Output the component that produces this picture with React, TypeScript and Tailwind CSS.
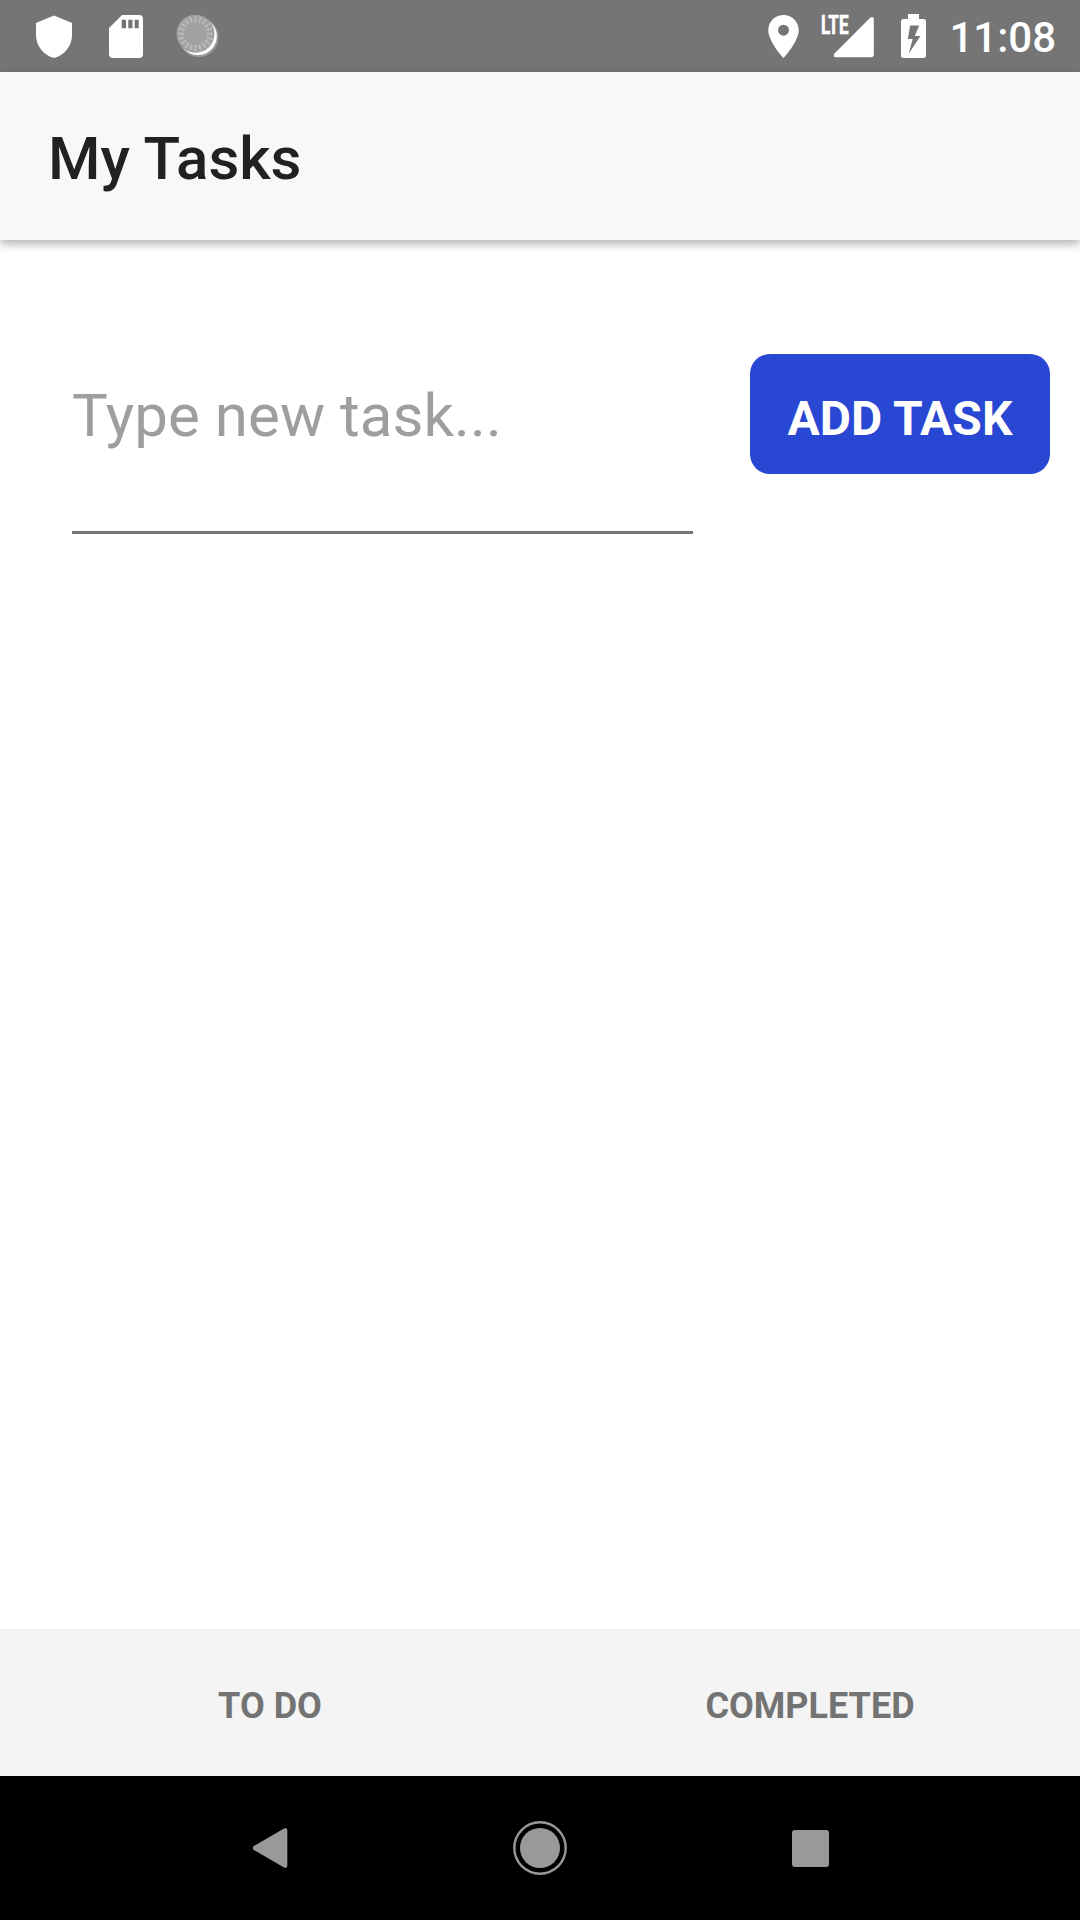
import React from "react";

const tickAngles = Array.from({ length: 20 }, (_, i) => i * 18);

function NotificationIcons() {
  return (
    <div className="flex items-center">
      <svg className="ml-9 h-[43px] w-9" viewBox="0 0 36 43" fill="#fff">
        <path d="M18 0.5 L36 8 V20 C36 30.5 28.5 40.5 18 43 C7.500 40.500 0 30.500 0 20 V8 Z" />
      </svg>
      <svg className="ml-[37px] h-[43px] w-[34px]" viewBox="0 0 34 43">
        <path
          fill="#fff"
          fillRule="evenodd"
          d="M13 0 H30 Q34 0 34 4 V39 Q34 43 30 43 H4 Q0 43 0 39 V13 Z M12.700 4.700 V13.300 H17 V4.700 Z M19.300 4.700 V13.300 H23.500 V4.700 Z M25.700 4.700 V13.300 H29.700 V4.700 Z"
        />
      </svg>
      <svg className="ml-[32px] h-[46px] w-[46px]" viewBox="0 0 46 46">
        <circle cx="23.800" cy="24.200" r="19.800" fill="#fff" opacity="0.28" />
        <circle cx="23" cy="23.300" r="18.800" fill="#fff" />
        <circle cx="20.500" cy="20.700" r="19" fill="#a1a1a1" />
        <g stroke="#b8b8b8" strokeWidth="2.200">
          {tickAngles.map((angle) => (
            <line key={angle} x1="20.500" y1="3.200" x2="20.500" y2="9.200" transform={`rotate(${angle} 20.500 20.700)`} />
          ))}
        </g>
      </svg>
    </div>
  );
}

function SystemIcons() {
  return (
    <div className="flex items-center">
      <svg className="mr-[22px] h-[43px] w-[31px]" viewBox="0 0 31 43">
        <path
          fill="#fff"
          fillRule="evenodd"
          d="M15.500 0 C6.900 0 0.300 6.700 0.300 15.200 C0.300 26.500 15.500 43 15.500 43 S30.700 26.500 30.700 15.200 C30.700 6.700 24.100 0 15.500 0 Z M15.500 9.700 A5.500 5.500 0 1 1 15.500 20.700 A5.500 5.500 0 1 1 15.500 9.700 Z"
        />
      </svg>
      <svg className="mr-[27px] h-[43px] w-[53px] overflow-visible" viewBox="0 0 53 43" fill="#fff">
        <text
          x="0"
          y="19.300"
          fontFamily="Roboto, sans-serif"
          fontSize="26"
          fontWeight="700"
          stroke="#fff"
          strokeWidth="0.700"
          textLength="27.500"
          lengthAdjust="spacingAndGlyphs"
        >
          LTE
        </text>
        <path d="M49.200 2.700 Q52.800 0.500 52.800 4.500 V39.500 Q52.800 42.300 50 42.300 H15 Q11.500 42 13.500 38.500 Z" />
      </svg>
      <svg className="mr-[23px] h-[44px] w-[25px]" viewBox="0 0 25 44">
        <path
          fill="#fff"
          fillRule="evenodd"
          d="M7 0 H18 V5 H22.500 Q25 5 25 7.500 V41.500 Q25 44 22.500 44 H2.500 Q0 44 0 41.500 V7.500 Q0 5 2.500 5 H7 Z M9.200 11.500 L6.800 25 H11.700 L7.700 39.700 L19.500 22 H13.800 L18.200 11.500 Z"
        />
      </svg>
      <time className="mr-6 pt-[3px] text-[42px] leading-[50px] font-medium text-white">11:08</time>
    </div>
  );
}

function NavigationBar() {
  return (
    <nav className="grid h-36 grid-cols-4 items-center bg-black">
      <button aria-label="Back" className="col-start-1 flex translate-x-[135px] justify-center">
        <svg className="h-[42px] w-9" viewBox="0 0 36 42" fill="#999">
          <path d="M1.800 19 L32 1.500 Q35.300 0.200 35.300 3.500 V38.500 Q35.300 41.800 32 40.500 L1.800 23 Q-0.200 21 1.800 19 Z" />
        </svg>
      </button>
      <button aria-label="Home" className="col-span-2 col-start-2 flex justify-center">
        <svg className="h-14 w-14" viewBox="0 0 56 56">
          <circle cx="28" cy="28" r="25.700" fill="none" stroke="#999" strokeWidth="2.400" />
          <circle cx="28" cy="28" r="20" fill="#999" />
        </svg>
      </button>
      <button aria-label="Overview" className="flex -translate-x-[135px] justify-center">
        <span className="h-[37px] w-[37px] rounded-[3px] bg-[#999]" />
      </button>
    </nav>
  );
}

export default function App() {
  return (
    <div className="flex h-[1920px] w-[1080px] flex-col bg-white font-[Roboto,sans-serif]">
      <div className="flex h-[72px] shrink-0 items-center justify-between bg-[#757575]">
        <NotificationIcons />
        <SystemIcons />
      </div>
      <header className="flex h-[168px] shrink-0 items-center bg-[#f8f8f8] pt-[5px] pl-12 shadow-[0_4px_9px_rgba(0,0,0,0.30)]">
        <h1 className="text-[60px] leading-[70px] font-medium text-[#212121]">My Tasks</h1>
      </header>
      <main className="flex flex-1 items-start justify-between pt-[114px] pr-[30px] pl-[72px]">
        <input
          aria-label="New task"
          placeholder="Type new task..."
          className="mt-[-16px] h-[196px] w-[621px] border-b-[3px] border-[#757575] bg-transparent pb-[38px] text-[60px] tracking-[0.08px] outline-none placeholder:text-[#9e9e9e]"
        />
        <button className="h-[120px] w-[300px] rounded-[20px] bg-[#2847d2] pt-[9px] text-[48px] leading-[56px] font-bold text-white">
          ADD TASK
        </button>
      </main>
      <div className="grid h-[147px] shrink-0 grid-cols-2 border-t-2 border-[#f2f2f2] bg-[#f4f4f4] pt-1 text-[36px] font-bold text-[#737373]">
        <button>TO DO</button>
        <button>COMPLETED</button>
      </div>
      <NavigationBar />
    </div>
  );
}
